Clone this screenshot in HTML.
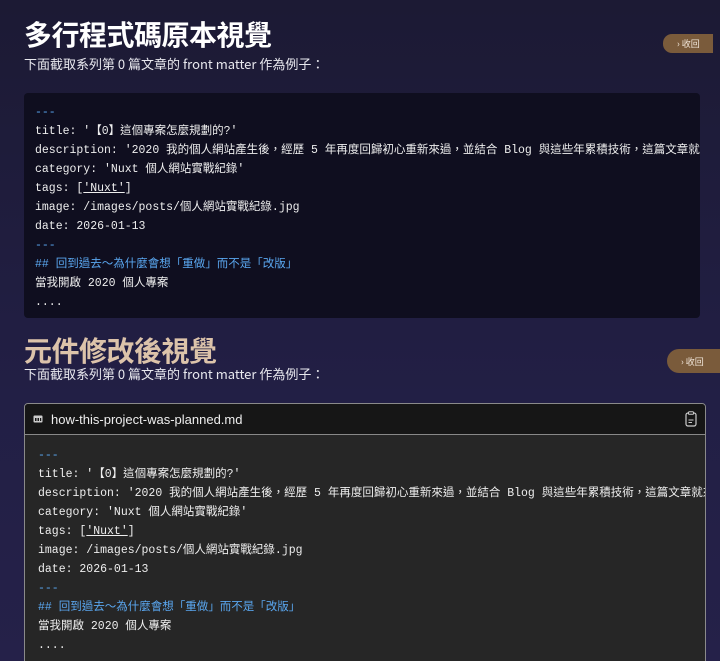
<!DOCTYPE html>
<html style="overflow:hidden;height:661px"><head><meta charset="utf-8"><style>
*{margin:0;padding:0;box-sizing:border-box}
body{width:720px;height:661px;overflow:hidden;background:linear-gradient(#1c1a34,#221f45 60%,#252149);font-family:"Liberation Sans","Noto Sans CJK TC",sans-serif;color:#fff;position:relative}
h1{position:absolute;left:24px;font-family:"Noto Sans CJK TC",sans-serif;font-weight:700;font-size:28px;line-height:32px;letter-spacing:-0.5px}
.sub{position:absolute;left:24px;font-size:13px;color:#e8e8ee;font-family:"Noto Sans CJK TC","Liberation Sans",sans-serif}
.btn{position:absolute;background:#7a5b3b;color:#f3e8dc;font-size:9px;font-family:"Noto Sans CJK TC",sans-serif;display:flex;align-items:center;padding-left:14px}
.code{position:absolute;overflow:hidden;font-family:"Liberation Mono","Noto Sans CJK TC",monospace;font-size:11.5px;white-space:pre;color:#eee}
.code div{height:19px;line-height:19px}
.b{color:#5aa7f0}
u{text-decoration:underline}
</style></head><body>
<h1 style="top:18px">多行程式碼原本視覺</h1>
<div class="sub" style="top:54px">下面截取系列第 0 篇文章的 front matter 作為例子：</div>
<div class="btn" style="left:663px;top:34px;width:50px;height:19px;border-radius:9px 0 0 9px">› 收回</div>
<div class="code" style="left:24px;top:93px;width:676px;height:225px;background:#0f0e1f;border-radius:4px;padding:10px 11px 0 11px"><div class="b">---</div><div>title: '【0】這個專案怎麼規劃的?'</div><div>description: '2020 我的個人網站產生後，經歷 5 年再度回歸初心重新來過，並結合 Blog 與這些年累積技術，這篇文章就來說有</div><div>category: 'Nuxt 個人網站實戰紀錄'</div><div>tags: [<u>'Nuxt'</u>]</div><div>image: /images/posts/個人網站實戰紀錄.jpg</div><div>date: 2026-01-13</div><div class="b">---</div><div class="b">## 回到過去～為什麼會想「重做」而不是「改版」</div><div>當我開啟 2020 個人專案</div><div>....</div></div>
<h1 style="top:334px;color:#dcc3aa">元件修改後視覺</h1>
<div class="sub" style="top:364px">下面截取系列第 0 篇文章的 front matter 作為例子：</div>
<div class="btn" style="left:667px;top:349px;width:53px;height:24px;border-radius:12px 0 0 12px">› 收回</div>
<div style="position:absolute;left:24px;top:403px;width:682px;height:270px;border:1px solid #8a8a8a;border-radius:4px;background:#262626;overflow:hidden">
<div style="height:31px;background:#161616;border-bottom:1px solid #888;display:flex;align-items:center;padding-left:8px;font-size:13px;color:#eee">
<svg width="10" height="8" viewBox="0 0 10 8" style="margin-right:8px"><rect x="0.5" y="0.5" width="9" height="7" rx="1" fill="#ccc"/><rect x="2" y="3" width="1.5" height="3" fill="#161616"/><rect x="4.5" y="3" width="1.5" height="3" fill="#161616"/><rect x="7" y="3" width="1.2" height="3" fill="#161616"/></svg>how-this-project-was-planned.md
<svg width="12" height="16" viewBox="0 0 12 16" style="position:absolute;right:8px;top:7px"><rect x="1" y="2" width="10" height="13" rx="2" fill="none" stroke="#ccc" stroke-width="1.2"/><rect x="3.5" y="0.8" width="5" height="2.5" rx="0.8" fill="#161616" stroke="#ccc" stroke-width="1"/><line x1="3.5" y1="9" x2="8.5" y2="9" stroke="#ccc"/><line x1="3.5" y1="11.5" x2="7" y2="11.5" stroke="#ccc"/></svg>
</div>
<div class="code" style="position:relative;padding:11px 13px 0 13px"><div class="b">---</div><div>title: '【0】這個專案怎麼規劃的?'</div><div>description: '2020 我的個人網站產生後，經歷 5 年再度回歸初心重新來過，並結合 Blog 與這些年累積技術，這篇文章就來說有</div><div>category: 'Nuxt 個人網站實戰紀錄'</div><div>tags: [<u>'Nuxt'</u>]</div><div>image: /images/posts/個人網站實戰紀錄.jpg</div><div>date: 2026-01-13</div><div class="b">---</div><div class="b">## 回到過去～為什麼會想「重做」而不是「改版」</div><div>當我開啟 2020 個人專案</div><div>....</div></div></div>
</body></html>
